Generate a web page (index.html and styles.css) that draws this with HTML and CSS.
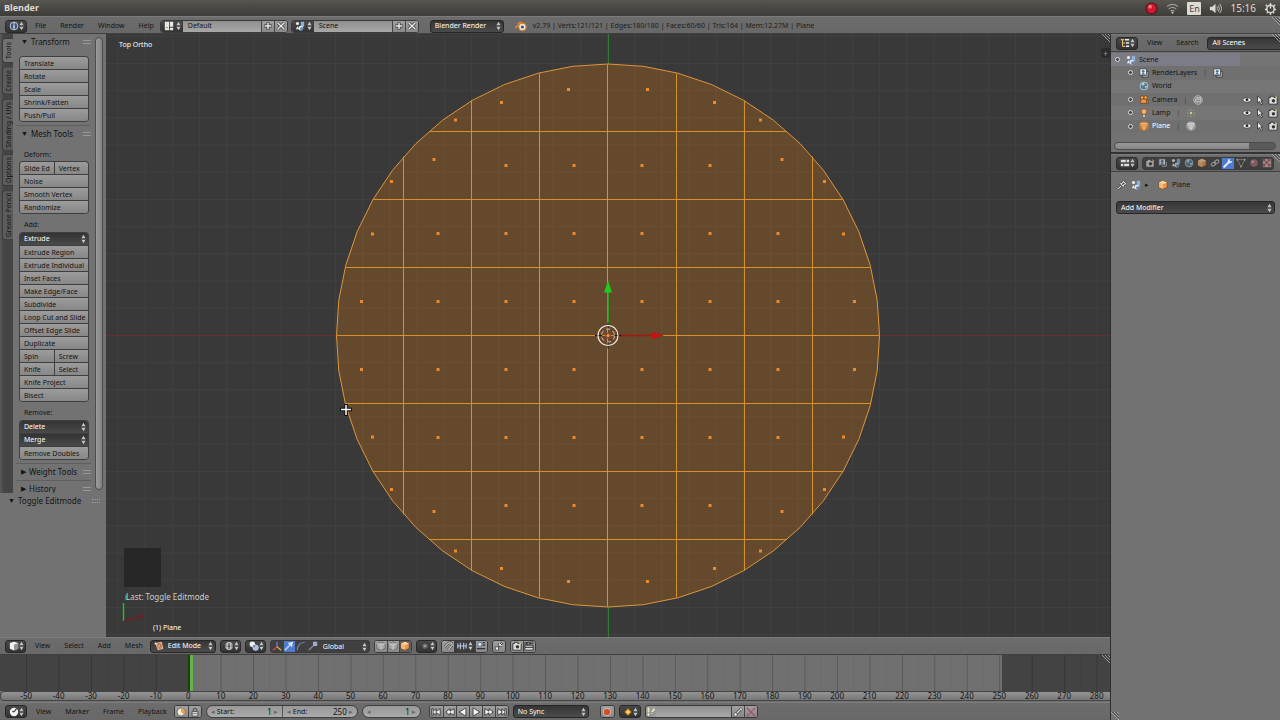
FILE: index.html
```html
<!DOCTYPE html>
<html lang="en">
<head>
<meta charset="utf-8">
<title>Blender</title>
<link rel="stylesheet" href="styles.css">
</head>
<body>
<svg class="defs" aria-hidden="true">
  <symbol id="ud" viewBox="0 0 6 12"><path d="M3 1L5.5 5H.5zM3 11L5.5 7H.5z" fill="#c4c4c4"/></symbol>
  <symbol id="grip" viewBox="0 0 8 8"><path d="M0 0L8 8M3 0L8 5M6 0L8 2" stroke="#b5b5b5" stroke-width=".8"/><path d="M1.5 0L8 6.5M4.5 0L8 3.5" stroke="#333" stroke-width=".8"/></symbol>
  <symbol id="info" viewBox="0 0 12 12"><circle cx="6" cy="6" r="4.6" fill="#3c4f7a" stroke="#dce4f4"/><path d="M6 5v4M6 2.8v1.4" stroke="#fff" stroke-width="1.5"/></symbol>
  <symbol id="layout" viewBox="0 0 12 12"><path d="M1 1h5v10H1zM7 1h4v6H7zM7 8h4v3H7z" fill="#e8e8e0"/><path d="M2 8h3" stroke="#888"/></symbol>
  <symbol id="scene" viewBox="0 0 12 12"><circle cx="3" cy="3" r="1.9" fill="#eee"/><path d="M7 1h4v6H7z" fill="#8fb0d8"/><path d="M1 10l2-4 2 4z" fill="#e8e8e8"/><circle cx="7" cy="8.6" r="2.8" fill="#dce8f5"/><circle cx="8" cy="9.4" r="1.9" fill="#5d82b5"/></symbol>
  <symbol id="plus" viewBox="0 0 12 12"><path d="M6 1.5v9M1.5 6h9" stroke="#333" stroke-width="3.4"/><path d="M6 2v8M2 6h8" stroke="#eee" stroke-width="1.7"/></symbol>
  <symbol id="cross" viewBox="0 0 12 12"><path d="M2 2l8 8M10 2l-8 8" stroke="#333" stroke-width="3.4"/><path d="M2 2l8 8M10 2l-8 8" stroke="#eee" stroke-width="1.7"/></symbol>
  <symbol id="logo" viewBox="0 0 12 12"><path d="M0 8L6 3.4H2.6M4.5 1.8L8 4" stroke="#e28a35" stroke-width="1.5" fill="none"/><circle cx="7.4" cy="6.9" r="3.7" fill="#f0e6dc" stroke="#d9792b" stroke-width="1.2"/><circle cx="7.4" cy="6.9" r="1.5" fill="#31507c"/></symbol>
  <symbol id="tree" viewBox="0 0 12 12"><path d="M1 2h4M3 2v8h3M3 6h3" stroke="#efc17a" stroke-width="1.2" fill="none"/><path d="M6 2h5M7 6h4M7 10h4" stroke="#eee" stroke-width="1.8"/></symbol>
  <symbol id="props" viewBox="0 0 12 12"><path d="M1 2h10v3H1zM1 7h10v3H1z" fill="#ddd"/><path d="M7 2h1v3H7zM4 7h1v3H4z" fill="#333"/></symbol>
  <symbol id="layers" viewBox="0 0 12 12"><path d="M4 4h7v7H4z" fill="#c4c4c4" stroke="#333"/><path d="M1 1h8v8H1z" fill="#eee" stroke="#444"/><circle cx="5" cy="4" r="1.6" fill="#496f9f"/><path d="M2 8l3-3 3 3z" fill="#597a9c"/></symbol>
  <symbol id="world" viewBox="0 0 12 12"><circle cx="6" cy="6" r="4.7" fill="#527894" stroke="#c9d8df" stroke-width=".9"/><path d="M3 3l3-1 1 2-3 2zM7 6l3 0-2 3z" fill="#b7d6d8"/></symbol>
  <symbol id="camera" viewBox="0 0 12 12"><circle cx="3.8" cy="3.2" r="2.2" fill="#f3a24d" stroke="#643411" stroke-width=".7"/><circle cx="8" cy="3.2" r="2.2" fill="#f3a24d" stroke="#643411" stroke-width=".7"/><path d="M2 5h7v5H2zM9 7l2-1v4L9 9" fill="#ef963d" stroke="#643411" stroke-width=".7"/></symbol>
  <symbol id="lamp" viewBox="0 0 12 12"><circle cx="6" cy="4.3" r="3.4" fill="#f5b36a" stroke="#79441a" stroke-width=".8"/><path d="M4.5 8h3v3h-3z" fill="#eee" stroke="#5a422c" stroke-width=".6"/></symbol>
  <symbol id="mesh" viewBox="0 0 12 12"><circle cx="6" cy="6" r="5.8" fill="#c57b30"/><path d="M2 3h8l-4 7zM4 3l2 3 2-3M6 6v4" stroke="#fbd09c" fill="none" stroke-width=".9"/></symbol>
  <symbol id="meshdata" viewBox="0 0 12 12"><circle cx="6" cy="6" r="5.7" fill="#a3a3a3"/><path d="M2 3h8l-4 7zM4 3l2 3 2-3M6 6v4" stroke="#e2e2e2" fill="none" stroke-width=".9"/></symbol>
  <symbol id="camdata" viewBox="0 0 12 12"><circle cx="6" cy="6" r="5.2" fill="#888" stroke="#bbb"/><path d="M3 5h6v3H3zM4 3h2v2M7 3h2v2" fill="none" stroke="#ccc"/></symbol>
  <symbol id="lampdata" viewBox="0 0 12 12"><circle cx="6" cy="6" r="1.5" fill="#cccd8b"/><path d="M6 1v2M6 9v2M1 6h2M9 6h2M2 2l1.5 1.5M8.5 8.5L10 10M10 2L8.5 3.5M3.500 8.500L2 10" stroke="#a5a677"/></symbol>
  <symbol id="eye" viewBox="0 0 12 12"><path d="M.5 6Q6-.5 11.500 6Q6 11.500 .5 6" fill="#f2f2f2" stroke="#333" stroke-width=".8"/><circle cx="6" cy="5.6" r="1.700" fill="#222"/></symbol>
  <symbol id="arrow" viewBox="0 0 12 12"><path d="M3 1l6 6H7l2 4-2 .6-1.600-3.800L3 9.500z" fill="#eee" stroke="#222" stroke-width=".9"/></symbol>
  <symbol id="still" viewBox="0 0 12 12"><path d="M1 3h2V1.500h4V3h4v8H1z" fill="#ddd" stroke="#292929"/><circle cx="6.500" cy="7" r="2.500" fill="#333" stroke="#fff" stroke-width=".7"/><path d="M9 1l1 1.500 1.500.5-1.500.8L9 5" fill="#e0cf70"/></symbol>
  <symbol id="cube" viewBox="0 0 12 12"><path d="M6 1l5 2v6l-5 2-5-2V3z" fill="#e89750" stroke="#613716" stroke-width=".7"/><path d="M1 3l5 2 5-2-5-2z" fill="#ffd39c"/><path d="M1.300 3.300L6 5v5.700L1.300 8.800z" fill="#f6b978"/></symbol>
  <symbol id="greycube" viewBox="0 0 12 12"><path d="M6 1l5 2v6l-5 2-5-2V3z" fill="#a9a9a9" stroke="#555" stroke-width=".7"/><path d="M1 3l5 2 5-2M6 5v6" stroke="#d1d1d1" fill="none"/></symbol>
  <symbol id="view3d" viewBox="0 0 12 12"><path d="M6 .8l5 1.600v6.800L6 11.500 1 9.200V2.400z" fill="#f1f1f1"/><path d="M6 4.500l5-2v6.700l-5 2.300z" fill="#929292"/></symbol>
  <symbol id="link" viewBox="0 0 12 12"><g fill="none" stroke="#c8c8c8" stroke-width="1.300" transform="rotate(-35 6 6)"><ellipse cx="3.600" cy="6" rx="2.900" ry="1.900"/><ellipse cx="8.400" cy="6" rx="2.900" ry="1.900"/></g></symbol>
  <symbol id="wrench" viewBox="0 0 12 12"><path d="M1.500 10.500L7 5" stroke="#e8eefb" stroke-width="2.400" stroke-linecap="round"/><path d="M10.800 3.500A2.600 2.600 0 1 1 8.500 1.200L7.700 3.300l1 1z" fill="#e8eefb"/></symbol>
  <symbol id="tri" viewBox="0 0 12 12"><path d="M1.500 2h9L6 10.500z" fill="none" stroke="#aaa"/><circle cx="1.500" cy="2" r="1" fill="#ddd"/><circle cx="10.500" cy="2" r="1" fill="#ddd"/><circle cx="6" cy="10.500" r="1" fill="#ddd"/></symbol>
  <symbol id="material" viewBox="0 0 12 12"><circle cx="6" cy="6" r="4.500" fill="#a76b70"/><circle cx="4.600" cy="4.500" r="1.600" fill="#dab8b8"/></symbol>
  <symbol id="texture" viewBox="0 0 12 12"><path d="M1 1h10v10H1z" fill="#d6b5b5"/><path d="M1 1h3v3H1zM7 1h3v3H7zM4 4h3v3H4zM1 7h3v3H1zM7 7h3v3H7z" fill="#9f4e55"/></symbol>
  <symbol id="pin" viewBox="0 0 12 12"><path d="M1 11l4-4M4 4l4 4M5 5l3-3M7 7l3-3M7 1l4 4" stroke="#333" stroke-width="3"/><path d="M1 11l4-4M4 4l4 4M5 5l3-3M7 7l3-3M7 1l4 4" stroke="#ddd" stroke-width="1.500"/></symbol>
  <symbol id="edit" viewBox="0 0 12 12"><path d="M2 3l7-1.500L10.500 9 5 10.500z" fill="#b16b42" stroke="#f0c9a5"/><path d="M2 3l4 3 3-4M6 6l-1 4M6 6l4.500 3" stroke="#f0d4b8" fill="none" stroke-width=".7"/><circle cx="2" cy="3" r="1.300" fill="#ffe7c7"/></symbol>
  <symbol id="wire" viewBox="0 0 12 12"><circle cx="6" cy="6" r="4.700" fill="#a0a0a0"/><path d="M6 1v10M1.500 6h9" stroke="#444"/><ellipse cx="6" cy="6" rx="2.400" ry="4.600" fill="none" stroke="#eee" stroke-width=".8"/></symbol>
  <symbol id="pivot" viewBox="0 0 12 12"><circle cx="4" cy="4" r="3.300" fill="#e9f0fa"/><circle cx="8" cy="8" r="3.300" fill="#a5bee0" stroke="#dfeafa" stroke-width=".7"/><circle cx="6" cy="6" r="1" fill="#222"/></symbol>
  <symbol id="axes" viewBox="0 0 12 12"><path d="M6 7V1" stroke="#6583d8" stroke-width="1.500"/><path d="M6 7l-5 4" stroke="#dc4a40" stroke-width="1.500"/><path d="M6 7l5 4" stroke="#c9c23c" stroke-width="1.500"/></symbol>
  <symbol id="move" viewBox="0 0 12 12"><path d="M1 11l7-7" stroke="#bdd5ff" stroke-width="1.600"/><path d="M4.500 2.500L11 1 9.500 7.500z" fill="#d5e5ff"/></symbol>
  <symbol id="rotate" viewBox="0 0 12 12"><path d="M1.500 11Q2 2 10.500 1.500" stroke="#6e83ad" stroke-width="1.400" fill="none"/></symbol>
  <symbol id="scale" viewBox="0 0 12 12"><path d="M1 11l7-7" stroke="#8699bd" stroke-width="1.400"/><path d="M6 1h5v5H6z" fill="#9eafd0"/></symbol>
  <symbol id="dot" viewBox="0 0 12 12"><circle cx="6" cy="6" r="4" fill="#666" stroke="#353535"/><circle cx="6" cy="6" r="1.600" fill="#969696"/></symbol>
  <symbol id="magnet" viewBox="0 0 12 12"><path d="M2 7l4-4q3-2 4.500 0t-1 4l-3.500 4" stroke="#444" stroke-width="3" fill="none"/><path d="M2 7l4-4q3-2 4.500 0t-1 4l-3.500 4" stroke="#bbb" stroke-width="1.700" fill="none"/></symbol>
  <symbol id="snap" viewBox="0 0 12 12"><path d="M1 3v6M4 2v8M8 2v8M11 3v6M1 6h10" stroke="#b6cdf0" stroke-width="1.300"/></symbol>
  <symbol id="snapto" viewBox="0 0 12 12"><circle cx="4.500" cy="4" r="2.500" fill="#dbe7fa" stroke="#4d658c"/><path d="M8 2h3M8 5h3M1 9h10" stroke="#333" stroke-width="1.500"/></symbol>
  <symbol id="auto" viewBox="0 0 12 12"><path d="M1.500 7h4v4h-4z" fill="#eee" stroke="#444"/><path d="M10.500 1.500L7 5M6.500 2.500v3h3" stroke="#333" stroke-width="2.600" fill="none"/><path d="M10.500 1.500L7 5M6.500 2.500v3h3" stroke="#eee" stroke-width="1.200" fill="none"/></symbol>
  <symbol id="clap" viewBox="0 0 12 12"><path d="M1 5h10v6H1zM1 2l10-1v2L1 4z" fill="#ddd" stroke="#222"/><path d="M3 2l1 2M7 1.500l1 2M1 7.500h10" stroke="#222" stroke-width="1.400"/></symbol>
  <symbol id="clock" viewBox="0 0 12 12"><circle cx="6" cy="6" r="5" fill="#f2f2f2"/><path d="M6 6l3-4M6 6L4 5" stroke="#333" stroke-width="1.300"/></symbol>
  <symbol id="preview" viewBox="0 0 12 12"><circle cx="6" cy="6" r="4.800" fill="#f5efe0" stroke="#444" stroke-width=".8"/><path d="M6 6V1.200A4.800 4.800 0 0 1 9.500 9.200z" fill="#efa24a"/></symbol>
  <symbol id="lock" viewBox="0 0 12 12"><path d="M2.500 5.500h7V11h-7z" fill="#ddd" stroke="#444"/><path d="M4 5V3q2-3 4 0v2" fill="none" stroke="#555" stroke-width="1.300"/><path d="M3 8h6" stroke="#777"/></symbol>
  <symbol id="first" viewBox="0 0 12 12"><path d="M.8 2H2.500v3.500L6 2v3.500L11 2v8L6 6.500V10L2.500 6.500V10H.8z" fill="#f3f3f3" stroke="#222" stroke-width=".9"/></symbol>
  <symbol id="rew" viewBox="0 0 12 12"><path d="M1 6l5-4v3l5-3v8L6 7v3z" fill="#f3f3f3" stroke="#222" stroke-width=".9"/></symbol>
  <symbol id="play" viewBox="0 0 12 12"><path d="M2.500 1l8 5-8 5z" fill="#f5f5f5" stroke="#222" stroke-width=".9"/></symbol>
  <symbol id="rec" viewBox="0 0 12 12"><circle cx="6" cy="6" r="5" fill="#c9b3ab"/><circle cx="6" cy="6" r="3.700" fill="#d84a25"/></symbol>
  <symbol id="keytype" viewBox="0 0 12 12"><path d="M6 1.500L10.500 6 6 10.500 1.500 6z" fill="#f0a62d" stroke="#4c350f" stroke-width=".7"/><circle cx="6" cy="6" r="1.500" fill="#ffe190"/></symbol>
  <symbol id="key" viewBox="0 0 12 12"><path d="M3.500 8.500L9 3" stroke="#333" stroke-width="3"/><path d="M3.500 8.500L9 3" stroke="#eee" stroke-width="1.500"/><circle cx="3" cy="9" r="2" fill="#eee" stroke="#333" stroke-width=".7"/><circle cx="9.500" cy="2.800" r="1.600" fill="#eee" stroke="#333" stroke-width=".7"/></symbol>
  <symbol id="keyset" viewBox="0 0 12 12"><path d="M3 1v7M10 2L6 8" stroke="#ece7bd" stroke-width="2"/><circle cx="3" cy="9" r="2" fill="#f2efd2" stroke="#555" stroke-width=".7"/><circle cx="7" cy="8" r="1.500" fill="#ddd" stroke="#555" stroke-width=".7"/></symbol>
  <symbol id="delkey" viewBox="0 0 12 12"><path d="M3 9l6-6" stroke="#bbb" stroke-width="2"/><path d="M1 1l10 10M11 1L1 11" stroke="#a3545c" stroke-width="1.700"/></symbol>
</svg>

<div class="app">
  <header class="titlebar">
    <h1>Blender</h1>
    <div class="tray">
      <svg viewBox="0 0 14 14"><circle cx="7" cy="7" r="6.500" fill="#641019"/><circle cx="7" cy="7" r="5.200" fill="#cf1a30"/><circle cx="5.500" cy="5" r="2" fill="#ee7680"/></svg>
      <svg viewBox="0 0 14 14"><path d="M1 5q6-5 12 0M3 7.500q4-3.500 8 0M5 10q2-2 4 0" fill="none" stroke="#a09d94" stroke-width="1.300"/><circle cx="7" cy="11.500" r="1" fill="#ddd"/></svg>
      <span class="lang">En</span>
      <svg viewBox="0 0 14 14"><path d="M1 5h2.500L7 2v10L3.500 9H1z" fill="#dedbd2"/><path d="M8.500 5q1.500 2 0 4M10 3.500q2.700 3.500 0 7M11.500 2q4 5 0 10" fill="none" stroke="#c9c6bd"/></svg>
      <time>15:16</time>
      <svg viewBox="0 0 14 14"><circle cx="7" cy="7.500" r="4" fill="none" stroke="#dedbd2" stroke-width="1.600"/><path d="M7 1v6M2 3l2 2M12 3l-2 2M1 8h2M13 8h-2M3 12l1-1M11 12l-1-1M7 12v2" stroke="#dedbd2" stroke-width="1.500"/></svg>
    </div>
  </header>

  <div class="bar info">
    <button class="editor" aria-label="Editor type: Info"><svg><use href="#info"/></svg><svg class="ud"><use href="#ud"/></svg></button>
    <nav class="menus"><button>File</button><button>Render</button><button>Window</button><button>Help</button></nav>
    <div class="data">
      <button class="editor flat" aria-label="Browse screens"><svg><use href="#layout"/></svg><svg class="ud"><use href="#ud"/></svg></button>
      <input value="Default" aria-label="Screen name">
      <button class="sq" aria-label="Add screen"><svg><use href="#plus"/></svg></button><button class="sq" aria-label="Delete screen"><svg><use href="#cross"/></svg></button>
    </div>
    <div class="data">
      <button class="editor flat" aria-label="Browse scenes"><svg><use href="#scene"/></svg><svg class="ud"><use href="#ud"/></svg></button>
      <input value="Scene" aria-label="Scene name">
      <button class="sq" aria-label="Add scene"><svg><use href="#plus"/></svg></button><button class="sq" aria-label="Delete scene"><svg><use href="#cross"/></svg></button>
    </div>
    <div class="pick engine"><select aria-label="Render engine"><option>Blender Render</option></select><svg class="ud"><use href="#ud"/></svg></div>
    <svg class="brand"><use href="#logo"/></svg>
    <span class="stats">v2.79 | Verts:121/121 | Edges:180/180 | Faces:60/60 | Tris:164 | Mem:12.27M | Plane</span>
    <svg class="corner"><use href="#grip"/></svg>
  </div>

  <div class="work">
    <main class="left">
      <section class="three">
        <aside class="shelf">
          <div class="tools">
            <div class="tabs"><button class="on">Tools</button><button>Create</button><button>Shading / UVs</button><button>Options</button><button>Grease Pencil</button></div>
            <div class="panels">
              <section class="panel"><h2>▼ <span>Transform</span><i></i></h2>
                <div class="group first"><button>Translate</button><button>Rotate</button><button>Scale</button><button>Shrink/Fatten</button><button>Push/Pull</button></div>
              </section>
              <section class="panel"><h2>▼ <span>Mesh Tools</span><i></i></h2>
                <h3 class="lead">Deform:</h3>
                <div class="group"><div class="pair"><button>Slide Ed</button><button>Vertex</button></div><button>Noise</button><button>Smooth Vertex</button><button>Randomize</button></div>
                <h3>Add:</h3>
                <div class="group"><div class="pick"><select aria-label="Extrude"><option>Extrude</option></select><svg class="ud"><use href="#ud"/></svg></div><button>Extrude Region</button><button>Extrude Individual</button><button>Inset Faces</button><button>Make Edge/Face</button><button>Subdivide</button><button>Loop Cut and Slide</button><button>Offset Edge Slide</button><button>Duplicate</button><div class="pair"><button>Spin</button><button>Screw</button></div><div class="pair"><button>Knife</button><button>Select</button></div><button>Knife Project</button><button>Bisect</button></div>
                <h3>Remove:</h3>
                <div class="group"><div class="pick"><select aria-label="Delete"><option>Delete</option></select><svg class="ud"><use href="#ud"/></svg></div><div class="pick"><select aria-label="Merge"><option>Merge</option></select><svg class="ud"><use href="#ud"/></svg></div><button>Remove Doubles</button></div>
              </section>
              <section class="panel"><h2>▶ <span>Weight Tools</span><i></i></h2></section>
              <section class="panel"><h2>▶ <span>History</span><i></i></h2></section>
            </div>
            <div class="vscroll"></div>
          </div>
          <div class="operator"><h2>▼ <span>Toggle Editmode</span><i></i></h2></div>
        </aside>

        <div class="viewport">
          <svg class="canvas" viewBox="0 0 1004 603" preserveAspectRatio="xMidYMin slice" role="img" aria-label="Circular mesh, top view">
            <defs>
              <pattern id="floor" width="27.2" height="27.2" x="501" y="301" patternUnits="userSpaceOnUse"><path d="M0 .5H28M.5 0V28" stroke="#fff" stroke-opacity=".035"/></pattern>
              <g id="quarter" fill="#ee8a2c">
                <path d="M-41-247.500h3v3h-3zM-108-234.500h3v3h-3zM-154-217h3v3h-3zM-175.500-177.500h3v3h-3zM-218-155.500h3v3h-3zM-103.500-171.500h3v3h-3zM-35.500-171.500h3v3h-3zM-237-103h3v3h-3zM-171.500-103.500h3v3h-3zM-103.500-103.500h3v3h-3zM-35.500-103.500h3v3h-3zM-248-35.500h3v3h-3zM-171.500-35.500h3v3h-3zM-103.500-35.500h3v3h-3zM-35.500-35.500h3v3h-3z"/>
              </g>
            </defs>
            <g transform="translate(502 301)">
              <path d="M-502 0H502V1H-502z" fill="#65252a"/><path d="M0-301H1V302H0z" fill="#2f7a33"/>
              <polygon transform="translate(0 .5)" fill="#65492c" stroke="#dc963d" points="0,-271.500 35.400,-269.200 70.300,-262.200 103.900,-250.800 135.800,-235.100 165.300,-215.400 192,-192 215.400,-165.300 235.100,-135.800 250.800,-103.900 262.200,-70.300 269.200,-35.400 271.500,0 269.200,35.400 262.200,70.300 250.800,103.900 235.100,135.800 215.400,165.300 192,192 165.300,215.400 135.800,235.100 103.900,250.800 70.300,262.200 35.400,269.200 0,271.500 -35.400,269.200 -70.300,262.200 -103.900,250.800 -135.800,235.100 -165.300,215.400 -192,192 -215.400,165.300 -235.100,135.800 -250.800,103.900 -262.200,70.300 -269.200,35.400 -271.500,0 -269.200,-35.400 -262.200,-70.300 -250.800,-103.900 -235.100,-135.800 -215.400,-165.300 -192,-192 -165.300,-215.400 -135.800,-235.100 -103.900,-250.800 -70.300,-262.200 -35.400,-269.200"/>
            </g>
            <rect width="1004" height="603" fill="url(#floor)"/>
            <g transform="translate(502 301.500)">
              <g stroke="#d8902a">
                <path d="M-271 0H271M-262-68H262M-262 68H262M-235-136H235M-235 136H235M-179-204H179M-179 204H179M-68.500-262V262M68.500-262V262M-136.500-235V235M136.500-235V235M-204.500-179V179M204.500-179V179"/>
                <path d="M-.5-271V271" stroke="#c4a022"/>
              </g>
              <use href="#quarter"/><use href="#quarter" transform="scale(-1 1)"/><use href="#quarter" transform="scale(1 -1)"/><use href="#quarter" transform="scale(-1 -1)"/>
              <path d="M0-10V-44" stroke="#25b51f" stroke-width="1.500"/><path d="M-4-43L0-55l4 12z" fill="#1fcb1f"/>
              <path d="M10 0H45" stroke="#a41a12" stroke-width="1.500"/><path d="M44-3.500L56 0 44 3.500z" fill="#c51313"/>
              <path d="M-13 0H-6M6 0H13M0-13V-6M0 6V13" stroke="#171310"/>
              <circle r="10" fill="none" stroke="#f2e9e1" stroke-width="1.200"/><circle r="6.500" fill="none" stroke="#e8bcae" stroke-dasharray="4 3"/><circle r="3" fill="#8d4331"/><circle r="1.500" fill="#f09b45"/>
            </g>
            <path d="M234 375.500h12M240 370v12" stroke="#111" stroke-width="3.500"/><path d="M235 375.500h10M240 371v10" stroke="#fff" stroke-width="1.500"/>
            <path d="M18 514h37v39H18z" fill="#272727"/>
            <path d="M17.500 587V569M20 566v-5" stroke="#28b82c" stroke-width="1.500"/><path d="M18 586.500L38 583M33 584l5-5" stroke="#741d23" stroke-width="1.500"/>
          </svg>
          <span class="proj">Top Ortho</span>
          <span class="last">Last: Toggle Editmode</span>
          <span class="obj">(1) Plane</span>
          <svg class="corner"><use href="#grip"/></svg>
          <button class="expand" aria-label="Show properties">+</button>
        </div>
      </section>

      <div class="bar view">
        <button class="editor" aria-label="Editor type: 3D View"><svg><use href="#view3d"/></svg><svg class="ud"><use href="#ud"/></svg></button>
        <nav class="menus"><button>View</button><button>Select</button><button>Add</button><button>Mesh</button></nav>
        <div class="pick mode"><svg class="lead-icon"><use href="#edit"/></svg><select aria-label="Mode"><option>Edit Mode</option></select><svg class="ud"><use href="#ud"/></svg></div>
        <button class="editor" aria-label="Shading"><svg><use href="#wire"/></svg><svg class="ud"><use href="#ud"/></svg></button>
        <button class="editor" aria-label="Pivot"><svg><use href="#pivot"/></svg><svg class="ud"><use href="#ud"/></svg></button>
        <div class="strip dark"><button aria-label="Manipulator"><svg><use href="#axes"/></svg></button><button class="on" aria-label="Translate manipulator"><svg><use href="#move"/></svg></button><button aria-label="Rotate manipulator"><svg><use href="#rotate"/></svg></button><button aria-label="Scale manipulator"><svg><use href="#scale"/></svg></button><div class="pick orient"><select aria-label="Orientation"><option>Global</option></select><svg class="ud"><use href="#ud"/></svg></div></div>
        <div class="strip"><button aria-label="Vertex select"><svg><use href="#greycube"/></svg></button><button aria-label="Edge select"><svg><use href="#greycube"/></svg></button><button class="down" aria-label="Face select"><svg><use href="#cube"/></svg></button></div>
        <button class="editor" aria-label="Proportional editing"><svg><use href="#dot"/></svg><svg class="ud"><use href="#ud"/></svg></button>
        <div class="strip"><button aria-label="Snap"><svg><use href="#magnet"/></svg></button><button class="editor flat" aria-label="Snap element"><svg><use href="#snap"/></svg><svg class="ud"><use href="#ud"/></svg></button><button aria-label="Snap target"><svg><use href="#snapto"/></svg></button></div>
        <div class="strip"><button aria-label="Auto merge"><svg><use href="#auto"/></svg></button></div>
        <div class="strip"><button aria-label="Render image"><svg><use href="#still"/></svg></button><button aria-label="Render animation"><svg><use href="#clap"/></svg></button></div>
      </div>

      <section class="timeline">
        <svg class="ticks" viewBox="0 0 1110 37" preserveAspectRatio="none" aria-hidden="true">
          <defs><pattern id="tick" x="26" width="32.440" height="37" patternUnits="userSpaceOnUse"><path d="M.5 0V37" stroke="#000" stroke-opacity=".2"/><path d="M16.500 0V37" stroke="#000" stroke-opacity=".04"/></pattern></defs>
          <path d="M0 0h1110v37H0z" fill="#434343"/><path d="M190 0h812v37H190z" fill="#707070"/><path d="M0 0h1110v37H0z" fill="url(#tick)"/><path d="M188 0h2v37h-2z" fill="#203c1b"/><path d="M190 0h3v37h-3z" fill="#64b449"/>
        </svg>
        <div class="ruler"><span>-50</span><span>-40</span><span>-30</span><span>-20</span><span>-10</span><span>0</span><span>10</span><span>20</span><span>30</span><span>40</span><span>50</span><span>60</span><span>70</span><span>80</span><span>90</span><span>100</span><span>110</span><span>120</span><span>130</span><span>140</span><span>150</span><span>160</span><span>170</span><span>180</span><span>190</span><span>200</span><span>210</span><span>220</span><span>230</span><span>240</span><span>250</span><span>260</span><span>270</span><span>280</span></div>
        <svg class="corner"><use href="#grip"/></svg>
      </section>

      <div class="bar foot">
        <button class="editor" aria-label="Editor type: Timeline"><svg><use href="#clock"/></svg><svg class="ud"><use href="#ud"/></svg></button>
        <nav class="menus"><button>View</button><button>Marker</button><button>Frame</button><button>Playback</button></nav>
        <div class="strip"><button aria-label="Use preview range"><svg><use href="#preview"/></svg></button><button aria-label="Lock time cursor"><svg><use href="#lock"/></svg></button></div>
        <div class="pill"><label>Start:<input value="1"></label><label>End:<input value="250"></label></div>
        <div class="pill one"><label><input value="1" aria-label="Current frame"></label></div>
        <div class="strip playback"><button aria-label="Jump to start"><svg><use href="#first"/></svg></button><button aria-label="Previous keyframe"><svg><use href="#rew"/></svg></button><button aria-label="Play reverse"><svg class="flip"><use href="#play"/></svg></button><button aria-label="Play"><svg><use href="#play"/></svg></button><button aria-label="Next keyframe"><svg class="flip"><use href="#rew"/></svg></button><button aria-label="Jump to end"><svg class="flip"><use href="#first"/></svg></button></div>
        <div class="pick sync"><select aria-label="Sync"><option>No Sync</option></select><svg class="ud"><use href="#ud"/></svg></div>
        <div class="strip record"><button aria-label="Automatic keyframes"><svg><use href="#rec"/></svg></button></div>
        <button class="editor" aria-label="Keyframe type"><svg><use href="#keytype"/></svg><svg class="ud"><use href="#ud"/></svg></button>
        <div class="data keying"><svg><use href="#keyset"/></svg><input value="" aria-label="Keying set"><button class="sq" aria-label="Insert keyframe"><svg><use href="#key"/></svg></button><button class="sq" aria-label="Delete keyframe"><svg><use href="#delkey"/></svg></button></div>
      </div>
    </main>

    <aside class="right">
      <section class="outliner">
        <div class="bar">
          <button class="editor" aria-label="Editor type: Outliner"><svg><use href="#tree"/></svg><svg class="ud"><use href="#ud"/></svg></button>
          <nav class="menus"><button>View</button><button>Search</button></nav>
          <div class="pick scenes"><select aria-label="Display mode"><option>All Scenes</option></select></div>
        </div>
        <ul class="tree">
          <li class="root"><b class="knob"></b><svg><use href="#scene"/></svg><span>Scene</span></li>
          <li><b class="knob"></b><svg><use href="#layers"/></svg><span>RenderLayers</span><em>|</em><svg><use href="#layers"/></svg></li>
          <li><b></b><svg><use href="#world"/></svg><span>World</span></li>
          <li><b class="knob"></b><svg><use href="#camera"/></svg><span>Camera</span><em>|</em><svg><use href="#camdata"/></svg><div class="flags"><svg><use href="#eye"/></svg><svg><use href="#arrow"/></svg><svg><use href="#still"/></svg></div></li>
          <li><b class="knob"></b><svg><use href="#lamp"/></svg><span>Lamp</span><em>|</em><svg><use href="#lampdata"/></svg><div class="flags"><svg><use href="#eye"/></svg><svg><use href="#arrow"/></svg><svg><use href="#still"/></svg></div></li>
          <li class="active"><b class="knob"></b><svg><use href="#mesh"/></svg><span>Plane</span><em>|</em><svg><use href="#meshdata"/></svg><div class="flags"><svg><use href="#eye"/></svg><svg><use href="#arrow"/></svg><svg><use href="#still"/></svg></div></li>
        </ul>
        <div class="hscroll"></div>
        <svg class="corner"><use href="#grip"/></svg>
      </section>
      <section class="properties">
        <div class="bar">
          <button class="editor" aria-label="Editor type: Properties"><svg><use href="#props"/></svg><svg class="ud"><use href="#ud"/></svg></button>
          <div class="strip dark contexts"><button aria-label="Render"><svg><use href="#still"/></svg></button><button aria-label="Render layers"><svg><use href="#layers"/></svg></button><button aria-label="Scene"><svg><use href="#scene"/></svg></button><button aria-label="World"><svg><use href="#world"/></svg></button><button aria-label="Object"><svg><use href="#cube"/></svg></button><button aria-label="Constraints"><svg><use href="#link"/></svg></button><button class="on" aria-label="Modifiers"><svg><use href="#wrench"/></svg></button><button aria-label="Data"><svg><use href="#tri"/></svg></button><button aria-label="Material"><svg><use href="#material"/></svg></button><button aria-label="Texture"><svg><use href="#texture"/></svg></button></div>
        </div>
        <div class="crumb"><svg><use href="#pin"/></svg><svg><use href="#scene"/></svg><i>▸</i><svg><use href="#cube"/></svg><span>Plane</span></div>
        <div class="pick modifier"><select aria-label="Add Modifier"><option>Add Modifier</option></select><svg class="ud"><use href="#ud"/></svg></div>
        <svg class="corner"><use href="#grip"/></svg>
        <svg class="corner low"><use href="#grip"/></svg>
      </section>
    </aside>
  </div>
</div>
</body>
</html>
```
FILE: styles.css
```css
* { box-sizing: border-box; }
body { margin: 0; background: #727272; }
body, button, input, select { font-family: "Noto Sans", sans-serif; font-size: 7px; line-height: 10px; color: #141414; }
button, input, select { margin: 0; padding: 0; border: 0; background: none; border-radius: 0; }
h1, h2, h3, ul { margin: 0; padding: 0; font-weight: 400; }
i, em { font-style: normal; }
svg { width: 10px; height: 10px; flex: none; display: block; }
svg.ud { width: 5px; height: 10px; }
.defs { position: absolute; width: 0; height: 0; }
.app { height: 100vh; display: flex; flex-direction: column; overflow: hidden; }

.titlebar { flex: none; height: 16px; display: flex; align-items: center; justify-content: space-between; padding: 0 3px 0 4px; background: linear-gradient(#565550, #3d3c38); }
.titlebar h1 { font: 700 9px/14px "Noto Sans", sans-serif; color: #dfdbd2; }
.tray { display: flex; align-items: center; gap: 8px; color: #dfdbd2; }
.tray svg { width: 13px; height: 13px; }
.tray time { font-size: 10px; line-height: 14px; }
.lang { width: 14px; height: 13px; border-radius: 1px; background: #dedbd3; color: #444; font-size: 9px; line-height: 13px; text-align: center; }

.bar { flex: none; height: 18px; display: flex; align-items: center; gap: 4px; padding: 0 5px; background: linear-gradient(#6c6c6c, #686868); border-top: 1px solid #7c7c7c; border-bottom: 1px solid #404040; position: relative; overflow: hidden; }
.bar > * { flex: none; }
.bar.info { padding-top: 2px; }
.menus { display: flex; gap: 14px; margin: 0 3px 0 5px; }
.info .menus { margin: 0 2px 0 4px; }
.editor { width: 22px; height: 13px; display: flex; align-items: center; justify-content: space-between; padding: 0 2px 0 3px; border: 1px solid #282828; border-radius: 3px; background: linear-gradient(#484848, #333); }
.editor.flat { border: 0; border-radius: 0; }
.data, .strip { display: flex; height: 13px; border: 1px solid #3a3a3a; border-radius: 3px; overflow: hidden; background: #999; }
.data + .data { margin-left: -1px; }
.data .editor, .strip > * { height: 11px; }
.data input { width: 78px; padding: 0 5px; background: linear-gradient(#909090, #a8a8a8); }
.sq, .strip button { width: 13px; display: flex; align-items: center; justify-content: center; background: linear-gradient(#a0a0a0, #8a8a8a); border-left: 1px solid #444; }
.strip button:first-child { border-left: 0; }
.strip .editor { width: 21px; background: #3c3c3c; justify-content: space-between; }
.strip.dark button { background: #404040; }
.strip.dark button.on { background: #4f7ccf; }
.strip button.down { background: #606060; }
.strip.dark { background: #404040; }
.pick { position: relative; display: flex; align-items: center; height: 13px; border: 1px solid #262626; border-radius: 3px; background: linear-gradient(#363636, #4b4b4b); }
.pick select { appearance: none; width: 100%; height: 11px; padding: 0 4px; color: #fff; outline: 0; }
.pick .ud { position: absolute; right: 2px; }
.engine { width: 74px; margin-left: 7px; }
.brand { width: 12px; height: 12px; margin-left: 7px; }
.stats { margin-left: 2px; color: #1c1c1c; }
.corner { position: absolute; right: 0; top: 0; width: 8px; height: 8px; }
.corner.low { right: auto; left: 0; top: auto; bottom: 0; }

.work { flex: 1; min-height: 0; display: flex; }
.left { flex: 1; min-width: 0; display: flex; flex-direction: column; }
.right { width: 170px; display: flex; flex-direction: column; border-left: 1px solid #2e2e2e; }
.three { flex: 1; min-height: 0; display: flex; }
.shelf { width: 106px; display: flex; flex-direction: column; background: #727272; }
.tools { height: 459px; display: flex; overflow: hidden; }
.tabs { width: 13px; flex: none; display: flex; flex-direction: column; align-items: flex-end; gap: 4px; padding-top: 4px; background: linear-gradient(90deg, #5a5a5a, #444 4px); }
.tabs button { writing-mode: vertical-rl; transform: rotate(180deg); width: 11px; line-height: 11px; padding: 2px 0; background: #5c5c5c; border: 1px solid #3c3c3c; border-left: 0; border-radius: 0 3px 3px 0; }
.tabs .on { background: #727272; padding: 3px 0; }
.panels { flex: 1; min-width: 0; padding: 0 4px 0 3px; }
.panel { padding-left: 3px; border-bottom: 1px solid #5f5f5f; }
.panel h2, .operator h2 { display: flex; align-items: center; gap: 3px; height: 16px; font-size: 7px; line-height: 10px; padding-left: 2px; white-space: nowrap; }
h2 span { font-size: 8px; }
h2 i { margin-left: auto; width: 8px; height: 4px; border-top: 1px solid #999; border-bottom: 1px solid #999; }
.panel h3 { font-size: 7px; line-height: 10px; height: 18px; padding: 6px 5px 0; }
.panel h3.lead { height: 19px; padding-top: 8px; }
.group { width: 70px; border: 1px solid #3f3f3f; border-bottom: 0; border-radius: 4px; overflow: hidden; }
.group.first { margin-top: 6px; }
.group button, .group .pick { display: block; width: 100%; height: 13px; padding: 0 4px; text-align: left; line-height: 11px; white-space: nowrap; overflow: hidden; background: linear-gradient(#9c9c9c, #878787); border: 0; border-bottom: 1px solid #3f3f3f; border-radius: 0; }
.group .pick { display: flex; padding: 0; background: linear-gradient(#333, #4a4a4a); }
.group > :last-child { border-radius: 0 0 3px 3px; }
.pair { display: flex; }
.pair button + button { border-left: 1px solid #3f3f3f; }
.group:last-child { margin-bottom: 3px; }
.vscroll { flex: none; width: 8px; margin: 3px 3px 3px 0; border: 1px solid #4d4d4d; border-radius: 4px; background: linear-gradient(90deg, #9c9c9c, #828282); }
.operator { flex: 1; padding: 0 6px; }
.operator i { border-top-style: dotted; border-bottom-style: dotted; }

.viewport { flex: 1; min-width: 0; position: relative; background: #393939; color: #fff; overflow: hidden; }
.canvas { width: 100%; height: 100%; }
.proj, .last, .obj { position: absolute; }
.proj { left: 13px; top: 6px; }
.last { left: 20px; bottom: 35px; font-size: 8px; color: #ccc; }
.obj { left: 47px; bottom: 4px; }
.expand { position: absolute; right: 0; top: 14px; width: 9px; height: 10px; border-radius: 3px 0 0 3px; background: #2b2b2b; color: #999; font-size: 8px; line-height: 9px; }

.view .editor { width: 21px; }
.view .strip button { width: 12px; }
.view .strip .editor { width: 21px; }
.mode { width: 66px; }
.lead-icon { margin-left: 3px; }
.strip .orient { width: 50px; border: 0; background: none; }
.timeline { flex: none; height: 47px; display: flex; flex-direction: column; position: relative; overflow: hidden; }
.ticks { width: 100%; height: 36px; }
.ruler { position: relative; height: 10px; display: flex; border: 1px solid #444; border-radius: 4px; background: linear-gradient(#949494, #777); margin: 0 -4px 1px 0; padding-left: 9px; }
.ruler span { flex: 1 0 0; min-width: 0; text-align: center; font-size: 8px; line-height: 8px; }
.foot { border-bottom: 0; }
.pill { display: flex; height: 13px; border: 1px solid #3e3e3e; border-radius: 7px; background: linear-gradient(#989898, #aaa); }
.pill label { width: 75px; display: flex; align-items: center; padding: 0 4px; font-size: 7px; }
.pill label::before { content: "◂"; color: #666; margin-right: 2px; }
.pill label::after { content: "▸"; color: #666; margin-left: 2px; }
.pill label + label { border-left: 1px solid #555; }
.pill input { flex: 1; min-width: 0; text-align: right; font-size: 8px; }
.pill.one label { width: 57px; }
.flip { transform: scaleX(-1); }
.playback { margin-left: 4px; }
.sync { width: 76px; }
.record { margin-left: 7px; }
.keying { align-items: center; }
.keying input { height: 11px; width: 75px; }
.keying .sq { height: 11px; }

.outliner { position: relative; height: 120px; border-bottom: 2px solid #333; }
.scenes { width: 80px; margin-left: 3px; }
.outliner .menus { margin-right: 2px; }
.tree { height: 80px; margin-top: 1px; display: grid; grid-template-rows: repeat(6, 1fr); list-style: none; }
.tree li { position: relative; display: flex; align-items: center; padding-left: 17px; background: #707070; }
.tree li:nth-child(odd) { background: #767676; }
.tree li.root { padding-left: 4px; background: linear-gradient(90deg, #7c7c87 129px, #747474 129px); }
.tree b { width: 5px; height: 5px; margin-right: 6px; flex: none; }
.tree .knob { border: 1px solid #ddd; border-radius: 50%; background: #444; }
.tree span { margin-left: 3px; }
.tree em { margin: 0 6px; color: #444; }
.tree .active span { color: #fff; }
.flags { position: absolute; right: 2px; display: flex; gap: 3px; }
.hscroll { height: 8px; margin: 9px 4px 0 3px; border: 1px solid #4d4d4d; border-radius: 4px; background: linear-gradient(#999, #858585) 0 0 / 84% 100% no-repeat #5a5a5a; }
.properties { position: relative; flex: 1; background: #727272; }
.contexts button:not(.on) svg { opacity: .65; }
.crumb { display: flex; align-items: center; gap: 4px; height: 25px; padding: 0 6px; }
.crumb i { margin-right: 5px; }
.modifier { margin: 4px 5px 0; }
```
